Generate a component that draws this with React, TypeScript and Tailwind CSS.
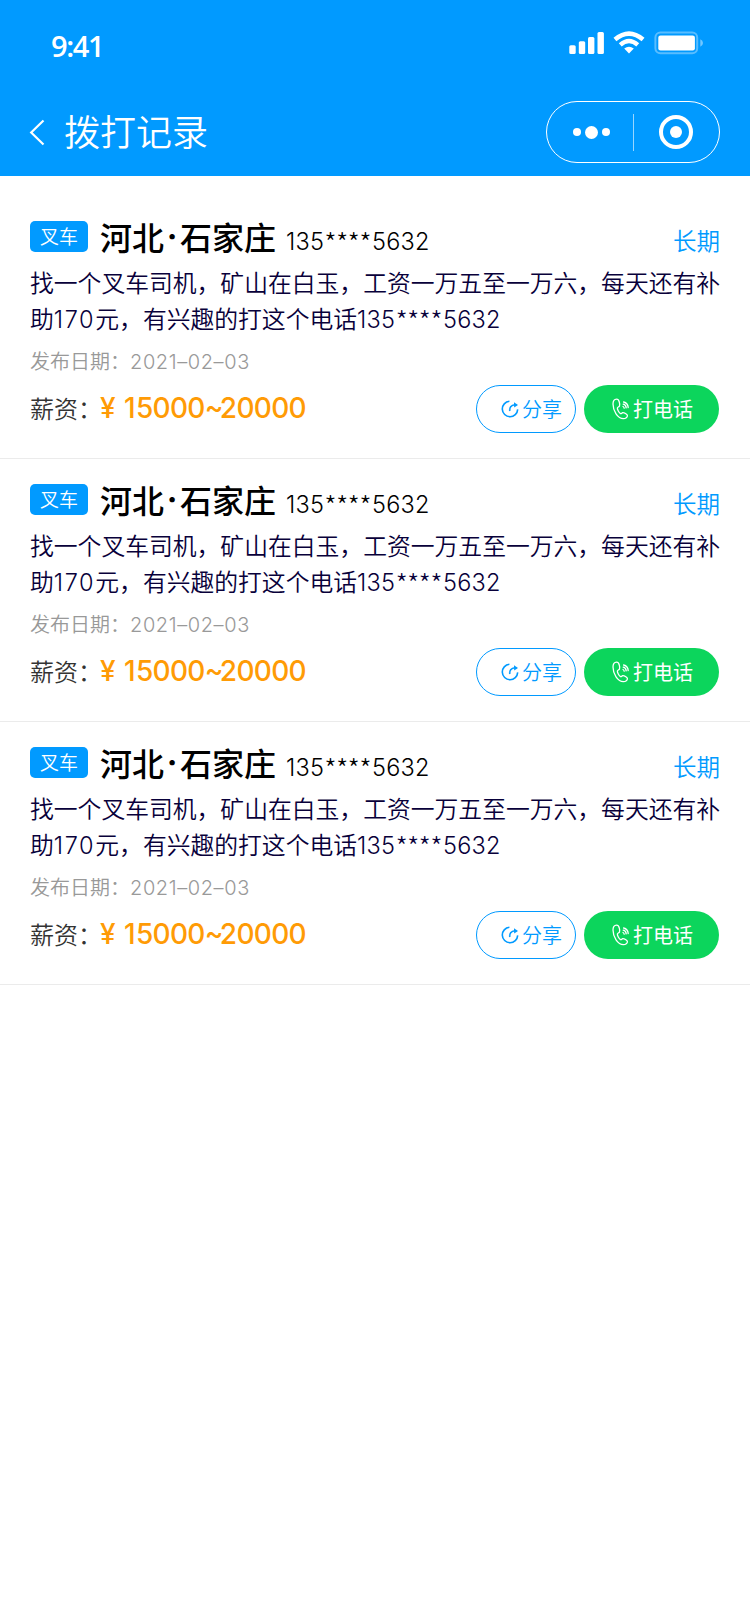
const records = [
  { id: 1, tag: "叉车", province: "河北", city: "石家庄", term: "长期", date: "2021–02–03", min: 15000, max: 20000 },
  { id: 2, tag: "叉车", province: "河北", city: "石家庄", term: "长期", date: "2021–02–03", min: 15000, max: 20000 },
  { id: 3, tag: "叉车", province: "河北", city: "石家庄", term: "长期", date: "2021–02–03", min: 15000, max: 20000 },
];

type CallRecord = (typeof records)[number];

function Phone({ className = "" }: { className?: string }) {
  return (
    <span className={`font-['Inter',sans-serif] text-[23.5px] tracking-[0.2px] ${className}`}>
      135<span className="relative top-[4px] -ml-px inline-block w-[49px] text-center font-['Noto_Sans_CJK_SC',sans-serif] text-[28px] leading-none font-light tracking-[-0.8px]">****</span>5632
    </span>
  );
}

function ShareIcon() {
  return (
    <svg width="18" height="18" viewBox="0 0 18 18" fill="none" stroke="currentColor" strokeWidth="1.6">
      <path d="M8.400 1.300A7.700 7.700 0 1 0 16.700 9.400" />
      <path d="M8.800 11C8.200 7.800 10 5.200 14 4.800" />
      <path d="M13 2.200 17 4.900l-3.800 2.700z" fill="currentColor" stroke="none" />
    </svg>
  );
}

function PhoneIcon() {
  return (
    <svg width="18" height="22" viewBox="0 0 18 22" fill="none" stroke="currentColor" strokeWidth="1.3" strokeLinecap="round" strokeLinejoin="round">
      <path d="M4.600 1.200C2.300 1.300 1 3.200 1 6c0 6.600 4.600 14.600 10.400 14.700 2.300 0 4.100-1.600 4-3.100 0-1.100-3.500-3.400-4.700-3-.9.300-1.300 1.400-2.200 1C6.900 14.800 5.200 11.400 5.400 10c.1-.9 1.700-1 2.100-2C8.100 6.500 7.300 1.100 4.600 1.200z" />
      <path d="M11 8.500a2 2 0 0 1 1.200 1.700M11.200 6.200a4 4 0 0 1 3 3.700M11.600 4a6 6 0 0 1 4.600 5.600" />
    </svg>
  );
}

function StatusBar() {
  return (
    <div className="flex h-[88px] items-start justify-between pr-[46px] pl-[51px] text-white">
      <span className="mt-[26px] font-['Open_Sans',sans-serif] text-[29px] leading-[40px] font-semibold tracking-[-1.4px]">9:41</span>
      <svg className="mt-[30px]" width="135" height="25" viewBox="569 30 135 25" fill="currentColor">
        <rect x="569.300" y="45.300" width="6.400" height="8.700" rx="1.500" />
        <rect x="578.800" y="41.300" width="6.400" height="12.700" rx="1.500" />
        <rect x="588" y="37" width="6.400" height="17" rx="1.500" />
        <rect x="597.500" y="32" width="6.400" height="22" rx="1.500" />
        <path d="M613.500 37.800Q629 24.800 644.500 37.800L641.600 41.200Q629 30.600 616.400 41.200z" />
        <path d="M618.800 43.200Q629 34.200 639.200 43.200L636.300 46.500Q629 40.200 621.700 46.500z" />
        <path d="M624.200 48.600Q629 44.800 633.800 48.600L629 53.600z" />
        <rect x="655.400" y="32.400" width="41.800" height="20.800" rx="5" fill="none" stroke="currentColor" strokeWidth="2" opacity=".35" />
        <rect x="658.300" y="35.600" width="36.600" height="14.800" rx="2.200" />
        <path d="M700.300 39.300Q703 40.500 703 43T700.300 46.700z" opacity=".45" />
      </svg>
    </div>
  );
}

function NavBar() {
  return (
    <div className="flex h-[88px] items-center pr-[30px] pl-[29px] text-white">
      <svg width="16" height="28" viewBox="0 0 16 28" fill="none" stroke="currentColor" strokeWidth="2.2">
        <path d="M14.500 2.500 2.200 14.500 14.500 26.500" />
      </svg>
      <h1 className="mb-1 ml-[19px] text-[36px] leading-[50px] font-[350]">拨打记录</h1>
      <div className="ml-auto flex h-[62px] w-[174px] items-center rounded-full border border-white">
        <div className="flex w-[86px] items-center justify-center gap-1 pl-[3px]">
          <i className="size-2 rounded-full bg-white" />
          <i className="size-[13px] rounded-full bg-white" />
          <i className="size-2 rounded-full bg-white" />
        </div>
        <div className="h-[37px] w-px bg-white/60" />
        <div className="flex flex-1 justify-center pr-px">
          <div className="flex size-[34px] items-center justify-center rounded-full border-4 border-white">
            <i className="size-3 rounded-full bg-white" />
          </div>
        </div>
      </div>
    </div>
  );
}

function RecordCard({ record }: { record: CallRecord }) {
  return (
    <li className="h-[263px] border-b border-[#ebebeb] px-[30px] pt-5">
      <div className="flex h-12">
        <span className="mt-[5px] h-[31px] w-[58px] rounded-[5px] bg-[#019aff] text-center text-[19px] leading-[30px] font-[350] text-white">
          {record.tag}
        </span>
        <h2 className="ml-3 flex text-[32px] leading-[40px] font-medium text-black">
          {record.province}
          <span className="mt-px w-4 text-center font-['Inter',sans-serif] font-bold">·</span>
          {record.city}
        </h2>
        <Phone className="ml-[10px] leading-[52px] font-light text-black" />
        <span className="ml-auto text-[23.5px] leading-[48px] font-[350] text-[#019aff]">{record.term}</span>
      </div>
      <p className="h-[73px] text-[23.8px] leading-[36px] font-[350] whitespace-nowrap text-[#08003a]">
        找一个叉车司机，矿山在白玉，工资一万五至一万六，每天还有补
        <br />
        助<span className="inline-block w-[41.5px] font-['Inter',sans-serif] text-[23.5px] leading-none tracking-[1.6px]">170</span>
        元，有兴趣的打这个电话
        <Phone className="leading-none" />
      </p>
      <div className="flex h-12 items-center text-[20px] font-[350] text-[#999]">
        发布日期：
        <span className="mt-px font-['Inter',sans-serif] tracking-[0.6px]">{record.date}</span>
      </div>
      <div className="flex h-12 items-center">
        <span className="mb-[2px] text-[24px] font-[350] text-[#333]">薪资：</span>
        <span className="mb-[2px] -ml-[2px] font-['Inter',sans-serif] text-[28px] font-medium tracking-[-0.7px] text-[#ff9b05]">
          ¥<span className="ml-[9px] tracking-[0.4px]">1</span>
          {String(record.min).slice(1)}
          <span className="relative -top-px tracking-[-3.5px]">~</span>
          {record.max}
        </span>
        <button className="ml-auto flex h-12 w-[100px] items-center rounded-full border border-[#019aff] pl-[24px] text-[20px] text-[#019aff]">
          <ShareIcon />
          <span className="ml-[3px] font-[350]">分享</span>
        </button>
        <button className="mr-px ml-2 flex h-12 w-[135px] items-center rounded-full bg-[#0cd55c] pl-[28px] text-[20px] text-white">
          <PhoneIcon />
          <span className="ml-[3px]">打电话</span>
        </button>
      </div>
    </li>
  );
}

export default function App() {
  return (
    <div className="min-h-screen w-[750px] bg-white font-['Noto_Sans_CJK_SC',sans-serif]">
      <header className="h-[176px] bg-[#019aff]">
        <StatusBar />
        <NavBar />
      </header>
      <ul className="pt-5">
        {records.map((record) => (
          <RecordCard key={record.id} record={record} />
        ))}
      </ul>
    </div>
  );
}
